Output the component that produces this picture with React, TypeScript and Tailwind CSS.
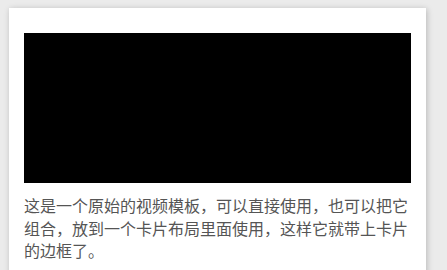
export default function App() {
  return (
    <div className="min-h-[270px] bg-[#ebebeb] pl-[9px] pt-[8px] pr-[21px] font-['Liberation_Sans','Noto_Sans_CJK_SC',sans-serif]">
      <div className="bg-white px-[15px] pt-[25px] pb-4 shadow-[1px_1px_6px_rgba(0,0,0,0.22)]">
        <div className="h-[150px] w-full bg-black" />
        <p className="mt-[13px] text-[16px] leading-[22.5px] text-[#555]">
          这是一个原始的视频模板，可以直接使用，也可以把它组合，放到一个卡片布局里面使用，这样它就带上卡片的边框了。
        </p>
      </div>
    </div>
  );
}
